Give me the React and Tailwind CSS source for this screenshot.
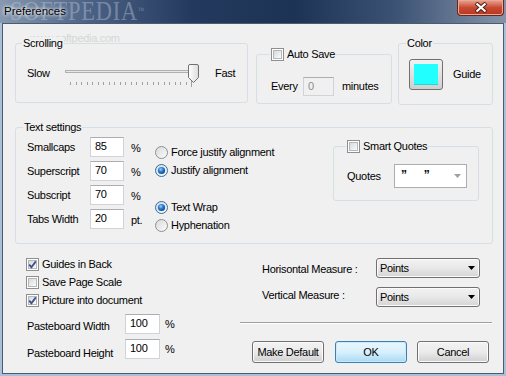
import React from "react";

function Check({ checked }) {
  return (
    <div className="relative w-[13px] h-[13px] shrink-0 border border-[#8e8f8f] bg-white p-[1px]">
      <div className="w-full h-full border border-[#b4b8bd] bg-linear-to-br from-[#d6d9dc] to-[#fbfbfb]" />
      {checked && (
        <svg className="absolute left-0 top-0" width="11" height="11" viewBox="0 0 11 11">
          <path d="M2.2 5.6 L4.4 8.2 L8.8 2.4" fill="none" stroke="#3f508c" strokeWidth="1.8" />
        </svg>
      )}
    </div>
  );
}

function Radio({ checked }) {
  return (
    <svg width="13" height="13" viewBox="0 0 13 13" className="shrink-0">
      <defs>
        <linearGradient id="rbg" x1="0" y1="0" x2="1" y2="1">
          <stop offset="0" stopColor="#d8d9da" />
          <stop offset="1" stopColor="#fcfcfc" />
        </linearGradient>
        <radialGradient id="rdot" cx="0.4" cy="0.35" r="0.7">
          <stop offset="0" stopColor="#9fd4ff" />
          <stop offset="0.45" stopColor="#2b7fd4" />
          <stop offset="1" stopColor="#0e3f80" />
        </radialGradient>
      </defs>
      <circle cx="6.5" cy="6.5" r="6" fill="url(#rbg)" stroke={checked ? "#2f6fa4" : "#8e8f8f"} />
      {checked && <circle cx="6.5" cy="6.5" r="3.6" fill="url(#rdot)" />}
    </svg>
  );
}

function Field({ w, h = 20, value, disabled }) {
  return (
    <div
      className={`${w} shrink-0 border border-[#d0d4da] border-t-[#abadb3] px-[4px] ${disabled ? "bg-[#f0f0f0] text-[#8d8d8d] border-[#c8c8c8]" : "bg-white"}`}
      style={{ height: h, lineHeight: `${h - 3}px` }}
    >
      {value}
    </div>
  );
}

function Group({ className, legend, children }) {
  return (
    <div className={`relative shrink-0 border border-[#d5dfe5] rounded-[3px] ${className}`}>
      <div className="absolute -top-[7px] bg-[#f0f0f0] px-[1px] leading-[13px] flex items-center gap-[3px]" style={{ left: legend.left }}>
        {legend.content}
      </div>
      {children}
    </div>
  );
}

function Combo({ label }) {
  return (
    <div className="w-[104px] h-[20px] flex items-center justify-between rounded-[3px] border border-[#707070] bg-linear-to-b from-[#f2f2f2] via-[#e8e8e8] to-[#d4d4d4] shadow-[inset_0_0_0_1px_#fbfbfb] pl-[3px] pr-[4px]">
      <span>{label}</span>
      <svg width="7" height="4" viewBox="0 0 7 4">
        <path d="M0 0 H7 L3.5 4 Z" fill="#000" />
      </svg>
    </div>
  );
}

function Btn({ children, primary, className = "" }) {
  return (
    <div
      className={`w-[72px] h-[22px] flex items-center justify-center rounded-[3px] border ${
        primary
          ? "border-[#3c7fb1] bg-linear-to-b from-[#eaf6fd] via-[#d9f0fc] to-[#a7d9f5] shadow-[inset_0_0_0_1px_#c9eafb]"
          : "border-[#707070] bg-linear-to-b from-[#f2f2f2] via-[#ebebeb] to-[#cfcfcf] shadow-[inset_0_0_0_1px_#fcfcfc]"
      } ${className}`}
    >
      {children}
    </div>
  );
}

export default function App() {
  return (
    <div className="relative w-[506px] h-[376px] overflow-hidden bg-[#a9c0d9] font-['Liberation_Sans',Arial,sans-serif]">
      {/* title bar */}
      <div className="relative h-[23px] flex items-start bg-[linear-gradient(90deg,#8799b0_0%,#4a6185_18%,#233a5e_38%,#1d3355_58%,#3b5274_78%,#8593a8_100%)]">
        <span className="absolute left-[10px] -top-[5px] text-[28px] leading-[32px] font-['Liberation_Serif',serif] text-[#c9d2dd]/40 scale-x-[0.8] origin-left tracking-[1px]">
          SOFTPEDIA<span className="text-[8px] align-top">™</span>
        </span>
        <span className="relative ml-[4px] mt-[4px] text-[11.5px] leading-[14px] text-black [text-shadow:0_0_5px_#ffffff,0_0_3px_#ffffff]">
          Preferences
        </span>
        <div className="ml-auto mr-[2px] w-[47px] h-[16px] rounded-b-[4px] border border-t-0 border-[#6a261c] bg-linear-to-b from-[#e7a594] via-[#c94a33] to-[#b8351e] shadow-[inset_0_0_0_1px_#eca897] flex items-center justify-center">
          <svg width="14" height="11" viewBox="0 0 14 11">
            <path d="M2 1 L12 10 M12 1 L2 10" stroke="#4a1d16" strokeWidth="4" />
            <path d="M2.5 1.5 L11.5 9.5 M11.5 1.5 L2.5 9.5" stroke="#ffffff" strokeWidth="2.2" />
          </svg>
        </div>
      </div>

      {/* client area */}
      <div className="relative ml-[2px] w-[502px] h-[351px] border border-[#4c5b6e] bg-[#f0f0f0] text-[11px] tracking-[-0.3px] text-black">
        <span className="absolute left-[27px] top-[8px] text-[11px] leading-[12px] text-[#d6d6d6]">www.softpedia.com</span>

        {/* top row */}
        <div className="flex items-start pt-[19px] pl-[12px]">
          <Group className="w-[233px] h-[60px]" legend={{ left: 6, content: <span>Scrolling</span> }}>
            <div className="flex items-start pt-[20px] pl-[11px]">
              <span className="w-[38px] h-[18px] leading-[18px]">Slow</span>
              <div className="relative w-[133px] h-[24px]">
                <div className="absolute left-0 right-[2px] top-[6px] h-[3px] border border-[#b0b0b0] bg-[#e7e7e7]" />
                <svg className="absolute left-[123px] top-0" width="11" height="19" viewBox="0 0 11 19">
                  <defs>
                    <linearGradient id="thumb" x1="0" y1="0" x2="1" y2="0">
                      <stop offset="0" stopColor="#ffffff" />
                      <stop offset="1" stopColor="#dcdcdc" />
                    </linearGradient>
                  </defs>
                  <path d="M0.5 2 Q0.5 0.5 2 0.5 H9 Q10.5 0.5 10.5 2 V13.5 L5.5 18.5 L0.5 13.5 Z" fill="url(#thumb)" stroke="#707070" />
                </svg>
                <svg className="absolute left-[5px] top-[17px]" width="125" height="6" viewBox="0 0 125 6">
                  {Array.from({ length: 23 }).map((_, i) => {
                    const x = Math.round(i * 5.5) + 0.5;
                    const last = i === 22;
                    return <line key={i} x1={x} x2={x} y1={last ? 0 : 1} y2={last ? 6 : 4} stroke="#a0a0a0" />;
                  })}
                </svg>
              </div>
              <span className="ml-[17px] h-[18px] leading-[18px]">Fast</span>
            </div>
          </Group>

          <Group
            className="ml-[8px] mt-[11px] w-[136px] h-[50px]"
            legend={{ left: 13, content: (<><Check /><span>Auto Save</span></>) }}
          >
            <div className="flex items-center pt-[22px] pl-[14px]">
              <span className="w-[32px]">Every</span>
              <Field w="w-[31px]" h={19} value="0" disabled />
              <span className="ml-[8px]">minutes</span>
            </div>
          </Group>

          <Group className="ml-[6px] w-[95px] h-[62px]" legend={{ left: 7, content: <span>Color</span> }}>
            <div className="flex items-center pt-[15px] pl-[10px]">
              <div className="w-[34px] h-[31px] rounded-[3px] border border-[#707070] bg-linear-to-b from-[#f2f2f2] to-[#cfcfcf] p-[4px]">
                <div className="w-full h-full bg-[#22ffff] border-b border-[#1fd8d8]" />
              </div>
              <span className="ml-[10px]">Guide</span>
            </div>
          </Group>
        </div>

        {/* text settings */}
        <Group className="ml-[12px] mt-[22px] w-[478px] h-[117px]" legend={{ left: 7, content: <span>Text settings</span> }}>
          <div className="flex items-start pt-[9px] pl-[11px]">
            <div className="flex flex-col gap-[4px]">
              {[
                ["Smallcaps", "85", "%"],
                ["Superscript", "70", "%"],
                ["Subscript", "70", "%"],
                ["Tabs Width", "20", "pt."],
              ].map(([l, v, u]) => (
                <div key={l} className="flex items-center h-[20px]">
                  <span className="w-[63px]">{l}</span>
                  <Field w="w-[34px]" value={v} />
                  <span className="ml-[7px] w-[24px] pt-[2px]">{u}</span>
                </div>
              ))}
            </div>
            <div className="mt-[6px] flex flex-col">
              <div className="h-[18px] flex items-center gap-[3px]"><Radio /><span>Force justify alignment</span></div>
              <div className="h-[18px] flex items-center gap-[3px]"><Radio checked /><span>Justify alignment</span></div>
              <div className="mt-[19px] h-[18px] flex items-center gap-[3px]"><Radio checked /><span>Text Wrap</span></div>
              <div className="h-[18px] flex items-center gap-[3px]"><Radio /><span>Hyphenation</span></div>
            </div>
            <Group
              className="ml-auto mr-[13px] mt-[9px] w-[146px] h-[55px]"
              legend={{ left: 12, content: (<><Check /><span>Smart Quotes</span></>) }}
            >
              <div className="flex items-center pt-[17px] pl-[13px]">
                <span className="w-[47px]">Quotes</span>
                <div className="w-[73px] h-[24px] flex border border-[#abadb3] bg-white">
                  <div className="flex-1 flex items-start gap-[17px] pl-[6px] pt-[1px] font-bold text-[12px]">
                    <span>”</span>
                    <span>”</span>
                  </div>
                  <div className="w-[18px] flex items-center justify-center">
                    <svg width="7" height="4" viewBox="0 0 7 4">
                      <path d="M0 0 H7 L3.5 4 Z" fill="#a0a0a0" />
                    </svg>
                  </div>
                </div>
              </div>
            </Group>
          </div>
        </Group>

        {/* bottom area */}
        <div className="flex">
          <div className="w-[237px] pl-[23px] pt-[11px]">
            <div className="h-[18px] flex items-center gap-[3px]"><Check checked /><span>Guides in Back</span></div>
            <div className="h-[18px] flex items-center gap-[3px]"><Check /><span>Save Page Scale</span></div>
            <div className="h-[18px] flex items-center gap-[3px]"><Check checked /><span>Picture into document</span></div>
            <div className="mt-[5px] flex items-start h-[20px]">
              <span className="w-[99px] pl-[1px] pt-[6px] leading-[13px]">Pasteboard Width</span>
              <Field w="w-[35px]" h={20} value="100" />
              <span className="ml-[5px] pt-[2px]">%</span>
            </div>
            <div className="mt-[5px] flex items-start h-[20px]">
              <span className="w-[99px] pl-[1px] pt-[8px] leading-[13px]">Pasteboard Height</span>
              <Field w="w-[35px]" h={20} value="100" />
              <span className="ml-[5px] pt-[2px]">%</span>
            </div>
          </div>

          <div className="w-[252px] pt-[14px]">
            <div className="flex items-center h-[20px] pl-[22px]">
              <span className="w-[114px] pt-[3px]">Horisontal Measure :</span>
              <Combo label="Points" />
            </div>
            <div className="mt-[9px] flex items-center h-[20px] pl-[22px]">
              <span className="w-[114px] -mt-[3px]">Vertical Measure :</span>
              <Combo label="Points" />
            </div>
            <div className="mt-[15px] h-[2px] border-t border-[#a0a0a0] border-b border-b-white" />
            <div className="mt-[17px] pl-[12px] flex">
              <Btn>Make Default</Btn>
              <Btn primary className="ml-[11px]">OK</Btn>
              <Btn className="ml-[10px]">Cancel</Btn>
            </div>
          </div>
        </div>
      </div>
    </div>
  );
}
